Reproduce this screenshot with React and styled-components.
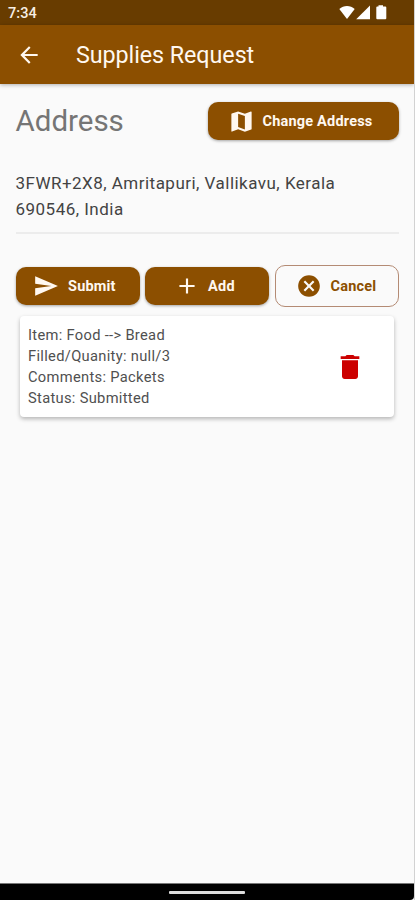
import React from "react";
import styled, { createGlobalStyle } from "styled-components";
import {
  MdAdd,
  MdArrowBack,
  MdCancel,
  MdDelete,
  MdMap,
  MdSend,
} from "react-icons/md";

const details = [
  { id: 1, text: "Item: Food --> Bread" },
  { id: 2, text: "Filled/Quanity: null/3" },
  { id: 3, text: "Comments: Packets" },
  { id: 4, text: "Status: Submitted" },
];

const App = () => (
  <Screen>
    <GlobalStyle />
    <StatusBar>
      <Clock>7:34</Clock>
      <StatusIcons />
    </StatusBar>
    <AppBar>
      <MdArrowBack size={26} />
      <Title>Supplies Request</Title>
    </AppBar>
    <Content>
      <AddressHeader>
        <Heading>Address</Heading>
        <Button $width={191} $gap={8} $start={20}>
          <MdMap size={27} />
          <Label $spacing={0.2}>Change Address</Label>
        </Button>
      </AddressHeader>
      <AddressText>
        <div>3FWR+2X8, Amritapuri, Vallikavu, Kerala</div>
        <div>690546, India</div>
      </AddressText>
      <Actions>
        <Button $width={124} $gap={9} $start={17.5}>
          <MdSend size={26} />
          <Label $spacing={0.2}>Submit</Label>
        </Button>
        <Button $width={124} $gap={8} $start={29}>
          <MdAdd size={26} />
          <Label $spacing={0.3}>Add</Label>
        </Button>
        <OutlinedButton $width={124} $gap={9} $start={20}>
          <MdCancel size={26} />
          <Label $spacing={0.2}>Cancel</Label>
        </OutlinedButton>
      </Actions>
      <Card>
        <Details>
          {details.map((el) => (
            <Detail key={el.id}>{el.text}</Detail>
          ))}
        </Details>
        <MdDelete size={32} color="#cc0000" />
      </Card>
    </Content>
    <NavBar>
      <HomeHandle />
    </NavBar>
  </Screen>
);

const StatusIcons = () => (
  <svg width="50" height="17" viewBox="0 0 50 17" fill="#fff">
    <path d="M0.3 5.1C4.6 1.1 11.4 1.1 15.7 5.1L8 15.1z" />
    <path d="M31 1.5v13.8H17.2z" />
    <path d="M39.5 1.3h4.5v1.2h2.3q1 0 1 1v10.8q0 1-1 1h-8q-1 0-1-1V3.5q0-1 1-1h1.2z" />
  </svg>
);

export default App;

const GlobalStyle = createGlobalStyle`
  * {
    box-sizing: border-box;
  }

  body {
    margin: 0;
    background: #fafafa;
    font-family: Roboto, sans-serif;
  }
`;

const Screen = styled.div`
  display: flex;
  flex-direction: column;
  width: 415px;
  height: 900px;
  overflow: hidden;
  background-color: #fafafa;
  border-right: 1px solid #d2d2d2;
`;

const StatusBar = styled.div`
  display: flex;
  flex-shrink: 0;
  align-items: center;
  justify-content: space-between;
  height: 25px;
  padding: 0 25px 0 8px;
  background-color: #683c00;
  color: #f7eee4;
`;

const Clock = styled.div`
  padding-top: 2px;
  font-size: 14.5px;
  letter-spacing: 0.1px;
  font-weight: 500;
  line-height: 23px;
`;

const AppBar = styled.div`
  display: flex;
  flex-shrink: 0;
  align-items: center;
  gap: 34px;
  height: 59px;
  padding-left: 16px;
  background-color: #8c4f00;
  color: #fff8f0;
  box-shadow: 0 1px 4px rgba(0, 0, 0, 0.3);
`;

const Title = styled.div`
  font-size: 23.3px;
  letter-spacing: -0.06px;
  white-space: nowrap;
`;

const Content = styled.div`
  display: flex;
  flex: 1;
  flex-direction: column;
  padding: 18px 15.5px 0 15.5px;
`;

const AddressHeader = styled.div`
  display: flex;
  align-items: center;
  justify-content: space-between;
  height: 38px;
`;

const Heading = styled.div`
  font-size: 29.5px;
  letter-spacing: 0;
  color: #757575;
`;

const Button = styled.div`
  display: flex;
  align-items: center;
  gap: ${(props) => props.$gap}px;
  width: ${(props) => props.$width}px;
  height: 38px;
  padding-left: ${(props) => props.$start}px;
  border-radius: 10px;
  background-color: #8c4f00;
  color: #fff8f0;
  box-shadow: 0 1px 3px rgba(0, 0, 0, 0.35);
`;

const OutlinedButton = styled(Button)`
  height: 42px;
  border: 1px solid #b48b74;
  background-color: transparent;
  color: #8c4f00;
  box-shadow: none;
`;

const Label = styled.div`
  font-size: 14.5px;
  font-weight: 700;
  letter-spacing: ${(props) => props.$spacing}px;
  white-space: nowrap;
`;

const AddressText = styled.div`
  height: 94px;
  padding-top: 31px;
  border-bottom: 2px solid #ececec;
  font-size: 17px;
  line-height: 25.5px;
  letter-spacing: 0.48px;
  color: #434343;
  white-space: nowrap;
`;

const Actions = styled.div`
  display: flex;
  align-items: center;
  justify-content: space-between;
  height: 42px;
  margin-top: 31px;
`;

const Card = styled.div`
  display: flex;
  align-items: center;
  justify-content: space-between;
  height: 101px;
  margin: 9px 4.5px 0 4.5px;
  padding: 0 28px 0 8px;
  border-radius: 4px;
  background-color: #fff;
  box-shadow: 0 2px 4px rgba(0, 0, 0, 0.28);
`;

const Details = styled.div`
  display: flex;
  flex-direction: column;
`;

const Detail = styled.div`
  font-size: 14.7px;
  line-height: 21px;
  letter-spacing: 0.31px;
  color: #505050;
  white-space: nowrap;
`;

const NavBar = styled.div`
  display: flex;
  flex-shrink: 0;
  justify-content: center;
  height: 17px;
  padding-top: 7px;
  border-top: 1px solid #777;
  border-bottom-right-radius: 4px;
  background-color: #000;
`;

const HomeHandle = styled.div`
  width: 76px;
  height: 3px;
  border-radius: 1px;
  background-color: #ddd;
`;
